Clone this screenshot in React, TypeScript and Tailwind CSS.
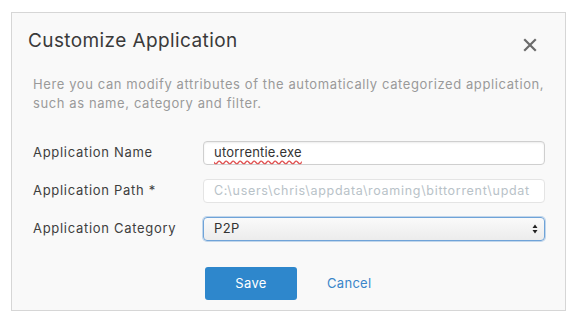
import React from "react";

export default function App() {
  return (
    <div className="w-[578px] h-[325px] bg-white pt-[12px] pl-[11px]" style={{ fontFamily: "Inter, 'Noto Sans', sans-serif" }}>
      <div className="w-[555px] h-[299px] bg-[#f9f9f9] border border-[#d6d6d6] flex flex-col">
        <div className="flex items-center justify-between pl-[16px] pr-[28px] pt-[14px]">
          <h1 className="text-[19px] leading-[28px] text-[#3a3a3a] tracking-[0.4px]">Customize Application</h1>
          <svg width="14" height="14" viewBox="0 0 14 14" className="mt-[8px]">
            <path d="M2 2L12 12M12 2L2 12" stroke="#6b6b6b" strokeWidth="2.2" strokeLinecap="square" />
          </svg>
        </div>
        <p className="pl-[21px] pr-[6px] mt-[20px] text-[13px] leading-[19px] tracking-[0.6px] text-[#9a9a9a]">
          Here you can modify attributes of the automatically categorized application, such as name, category and filter.
        </p>
        <div className="mt-[28px] pl-[21px] pr-[20px] flex flex-col gap-[14px]">
          <div className="flex items-center">
            <label className="w-[170px] text-[13px] tracking-[0.7px] text-[#3e3e3e]">Application Name</label>
            <div className="flex-1 h-[24px] bg-white border border-[#cfcfcf] rounded-[4px] flex items-center px-[10px] text-[13px] tracking-[0.2px] text-[#333] shadow-[inset_0_1px_2px_rgba(0,0,0,0.08)]">
              <span className="underline decoration-wavy decoration-[#e05050] underline-offset-2">utorrentie.exe</span>
            </div>
          </div>
          <div className="flex items-center">
            <label className="w-[170px] text-[13px] tracking-[0.7px] text-[#3e3e3e]">Application Path *</label>
            <div className="flex-1 h-[24px] bg-white border border-[#e4e4e4] rounded-[4px] flex items-center px-[10px] text-[12.5px] tracking-[0.7px] text-[#b8c2c8] overflow-hidden whitespace-nowrap">
              C:\users\chris\appdata\roaming\bittorrent\updat
            </div>
          </div>
          <div className="flex items-center">
            <label className="w-[170px] text-[13px] tracking-[0.7px] text-[#3e3e3e]">Application Category</label>
            <div className="flex-1 h-[24px] bg-gradient-to-b from-[#fafafa] to-[#ececec] border border-[#6fa3d8] rounded-[4px] flex items-center justify-between pl-[10px] pr-[6px] text-[13px] tracking-[0.4px] text-[#333] shadow-[0_0_0_1px_rgba(111,163,216,0.4)]">
              <span>P2P</span>
              <svg width="6" height="10" viewBox="0 0 6 10">
                <path d="M3 0.5L5.5 4H0.5Z M3 9.5L5.5 6H0.5Z" fill="#222" />
              </svg>
            </div>
          </div>
        </div>
        <div className="mt-[26px] pl-[193px] flex items-center gap-[30px]">
          <button className="w-[92px] h-[33px] bg-[#2e87cc] rounded-[3px] text-white text-[13px] tracking-[0.3px]">Save</button>
          <span className="text-[13px] text-[#3a85c9] tracking-[0.3px]">Cancel</span>
        </div>
      </div>
    </div>
  );
}
